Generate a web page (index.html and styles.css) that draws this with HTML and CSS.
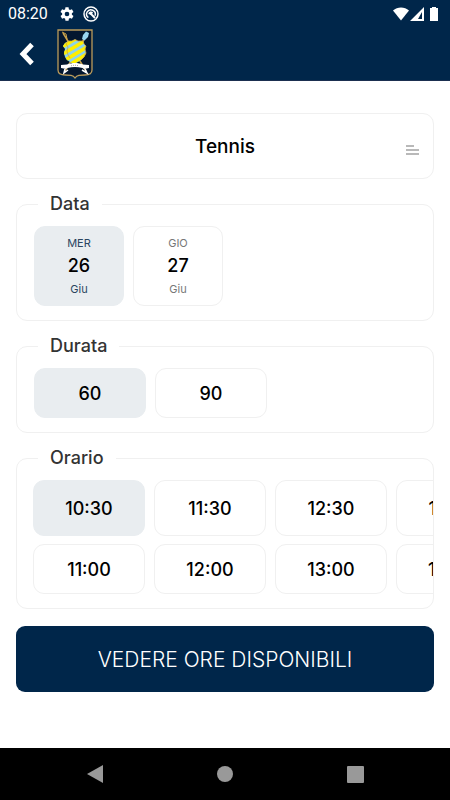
FILE: index.html
```html
<!DOCTYPE html>
<html lang="it">
<head>
    <meta charset="UTF-8">
    <meta name="viewport" content="width=device-width, initial-scale=1.0">
    <title>Prenotazione</title>
    <link rel="stylesheet" href="styles.css">
</head>
<body>

    <!-- Status bar and club header -->
    <header class="top">
        <div class="status-bar">
            <span class="clock">08:20</span>
            <svg class="status-icon" viewBox="0 0 24 24" aria-hidden="true">
                <path fill="#fff" fill-rule="evenodd" d="M9.700 2h4.600l.5 3 1.700 1 2.900-1.100 2.300 4-2.400 2v2.200l2.400 2-2.300 4-2.900-1.100-1.700 1-.5 3H9.700l-.5-3-1.700-1-2.900 1.100-2.300-4 2.400-2v-2.200l-2.400-2 2.300-4L7.500 6l1.700-1zM12 8.500a3.500 3.500 0 1 0 0 7 3.500 3.500 0 1 0 0-7z"/>
            </svg>
            <svg class="status-icon" viewBox="0 0 24 24" aria-hidden="true">
                <g fill="none" stroke="#fff" stroke-width="2.200">
                    <circle cx="12" cy="12" r="10.500"/>
                    <path d="M8 17.500a6.500 6.500 0 1 1 10-3"/>
                    <path stroke-width="3" d="M10 10l8 8"/>
                </g>
                <path d="M8 12a4 4 0 0 1 7-2.500l-2 4z" fill="#fff"/>
            </svg>
            <svg class="signal" viewBox="0 0 50 16" aria-hidden="true">
                <path fill="#fff" d="M1 4.500C5.500.5 12.500.5 17 4.500L9 14.500z"/>
                <path fill="#fff" fill-rule="evenodd" d="M32 1v14H18zM30 6l-4 7h4z"/>
                <path fill="#fff" d="M40 1h4v1h2v13h-8V2h2z"/>
            </svg>
        </div>
        <div class="header">
            <button class="back" type="button" aria-label="Indietro">
                <svg width="16" height="24" viewBox="0 0 16 24">
                    <path d="M13 2.500L4 12l9 9.500" fill="none" stroke="#fff" stroke-width="5"/>
                </svg>
            </button>
            <svg class="crest" viewBox="0 0 36 50" aria-hidden="true">
                <defs>
                    <clipPath id="shield">
                        <path d="M11 12h4l3-1.500 3 1.500h5l1 3 2 2-1 3 1 4-2 4-3 3-3 2-4 2-4-2-3-2-2-3-1-4 1-4-2-3 2-3z"/>
                    </clipPath>
                </defs>
                <path d="M1 1h34v40c0 4-3 5-7 5-5 0-8 0-10 3-2-3-5-3-10-3-4 0-7-1-7-5z" fill="#04172f" stroke="#b99a5b" stroke-width="1.300"/>
                <path d="M6 4l23 38M29 7L8 42" stroke="#c9a24c" stroke-width="1.500"/>
                <path d="M5 3l4 2 1 5" fill="none" stroke="#c9a24c"/>
                <path d="M25 10l1-4 3-3.500 3 1.500-1 4-3.500 3.500z" fill="#9ad5f0"/>
                <g clip-path="url(#shield)">
                    <path fill="#8ed3ea" d="M6 9h26v30H6z"/>
                    <path stroke="#ffee00" stroke-width="3.600" d="M5 18l20-12M5 25.500l26-15.500M5 33l26-15.500M8 38.500l23-14"/>
                </g>
                <path d="M11 12h4l3-1.500 3 1.500h5l1 3 2 2-1 3 1 4-2 4-3 3" fill="none" stroke="#c9a24c" stroke-width=".8"/>
                <path d="M11 12l-2 3 2 3-1 4 1 4 2 3" fill="none" stroke="#c9a24c" stroke-width=".8"/>
                <path fill="#fff" d="M4 36l6-.5c5-2 11-2 16 0l6 .5v3l-5 1-1.500-1c-5-1.500-10-1.500-15 0l-1.500 1-5-1z"/>
                <path d="M8 40l-1 4 4-3M28 40l2 4-5-3" fill="none" stroke="#fff" stroke-width="1.500"/>
                <path d="M14 36.800q4-1 8 0" fill="none" stroke="#8b8b8b" stroke-dasharray="1 1"/>
            </svg>
        </div>
    </header>

    <main class="booking">
        <form class="booking-form">
            <div class="sport">
                <select class="sport-select" aria-label="Sport">
                    <option>Tennis</option>
                </select>
                <svg class="sport-icon" width="13" height="10" viewBox="0 0 13 10" aria-hidden="true">
                    <path d="M0 1h8M0 5h13M0 9h13" stroke="#a3a3a3" stroke-width="1.500"/>
                </svg>
            </div>

            <fieldset class="group">
                <legend>Data</legend>
                <div class="options">
                    <label class="option day">
                        <input type="radio" name="data" value="26" checked>
                        <span class="small">MER</span>
                        <span class="number">26</span>
                        <span class="small">Giu</span>
                    </label>
                    <label class="option day">
                        <input type="radio" name="data" value="27">
                        <span class="small">GIO</span>
                        <span class="number">27</span>
                        <span class="small">Giu</span>
                    </label>
                </div>
            </fieldset>

            <fieldset class="group">
                <legend>Durata</legend>
                <div class="options">
                    <label class="option"><input type="radio" name="durata" value="60" checked>60</label>
                    <label class="option"><input type="radio" name="durata" value="90">90</label>
                </div>
            </fieldset>

            <fieldset class="group group-times">
                <legend>Orario</legend>
                <!-- Two rows that scroll sideways -->
                <div class="times">
                    <label class="option"><input type="radio" name="orario" value="10:30" checked>10:30</label>
                    <label class="option"><input type="radio" name="orario" value="11:00">11:00</label>
                    <label class="option"><input type="radio" name="orario" value="11:30">11:30</label>
                    <label class="option"><input type="radio" name="orario" value="12:00">12:00</label>
                    <label class="option"><input type="radio" name="orario" value="12:30">12:30</label>
                    <label class="option"><input type="radio" name="orario" value="13:00">13:00</label>
                    <label class="option"><input type="radio" name="orario" value="13:30">13:30</label>
                    <label class="option"><input type="radio" name="orario" value="14:00">14:00</label>
                </div>
            </fieldset>

            <button class="submit" type="button">VEDERE ORE DISPONIBILI</button>
        </form>
    </main>

    <!-- System navigation -->
    <nav class="system-nav">
        <button type="button" aria-label="Indietro">
            <svg width="18" height="18" viewBox="0 0 18 18"><path d="M1 9L17 0v18z" fill="#999"/></svg>
        </button>
        <button type="button" aria-label="Home">
            <svg width="18" height="18" viewBox="0 0 18 18"><circle cx="9" cy="9" r="8" fill="#999"/></svg>
        </button>
        <button type="button" aria-label="Recenti">
            <svg width="18" height="18" viewBox="0 0 18 18"><rect x="1" y="1" width="17" height="17" rx="1" fill="#999"/></svg>
        </button>
    </nav>

</body>
</html>
```

FILE: styles.css
```css
* {
    box-sizing: border-box;
}
body {
    margin: 0;
    min-height: 100vh;
    display: flex;
    flex-direction: column;
    background-color: #fff;
    color: #000;
    font-family: Inter, "Open Sans", sans-serif;
}
button {
    border: none;
    padding: 0;
    background: none;
    cursor: pointer;
}
svg {
    display: block;
}

/* Header */
.top {
    background-color: #00264a;
    border-bottom: 1px solid #1b2f50;
}
.status-bar {
    display: flex;
    align-items: center;
    gap: 8px;
    height: 27px;
    padding: 0 8px;
}
.clock {
    margin-right: 3px;
    color: #fff;
    font-family: Roboto, sans-serif;
    font-size: 16px;
}
.status-icon {
    width: 16px;
    height: 16px;
}
.signal {
    width: 50px;
    height: 16px;
    margin-left: auto;
}
.header {
    display: flex;
    align-items: center;
    gap: 22px;
    height: 53px;
    padding-left: 19px;
}
.crest {
    width: 36px;
    height: 50px;
}

/* Booking form */
.booking {
    flex: 1;
    padding: 32px 16px 20px;
}
.booking-form {
    display: flex;
    flex-direction: column;
    gap: 15px;
}
.sport {
    position: relative;
}
.sport-select {
    display: block;
    width: 100%;
    height: 66px;
    border: 1px solid #f0f0f0;
    border-radius: 11px;
    background-color: #fff;
    color: #000;
    font-family: inherit;
    font-size: 19px;
    font-weight: 500;
    text-align: center;
    text-align-last: center;
    appearance: none;
}
.sport-icon {
    position: absolute;
    right: 15px;
    bottom: 24px;
    pointer-events: none;
}
.group {
    min-width: 0;
    margin: 0;
    padding: 12px 17px 14px;
    border: 1px solid #f0f0f0;
    border-radius: 11px;
}
.group legend {
    margin-left: 4px;
    padding: 0 12px;
    color: #333;
    font-size: 18px;
    font-weight: 500;
    line-height: 20px;
}
.options {
    display: flex;
    gap: 9px;
}
.option {
    display: flex;
    align-items: center;
    justify-content: center;
    width: 112px;
    height: 50px;
    border: 1px solid #f0f0f0;
    border-radius: 11px;
    font-size: 18px;
    font-weight: 500;
    cursor: pointer;
}
.option input {
    appearance: none;
    width: 0;
    height: 0;
    margin: 0;
}
.option:has(input:checked) {
    background-color: #e9edf0;
    border-color: #e9edf0;
}
.option:has(input:focus-visible) {
    outline: 2px solid #00264a;
}
.day {
    flex-direction: column;
    width: 90px;
    height: 80px;
}
.day .small {
    color: #777;
    font-size: 11px;
    font-weight: 400;
    line-height: 20px;
}
.day:has(input:checked) .small {
    color: #2b4560;
}
.day .number {
    line-height: 26px;
}
.group-times {
    padding-right: 0;
    padding-left: 16px;
}
.group-times legend {
    margin-left: 5px;
}
.times {
    display: grid;
    grid-template-rows: 56px 50px;
    grid-auto-flow: column;
    grid-auto-columns: 112px;
    gap: 8px 9px;
    overflow-x: auto;
    scrollbar-width: none;
}
.times .option {
    height: auto;
}
.submit {
    height: 66px;
    margin-top: 2px;
    border-radius: 9px;
    background-color: #00264a;
    color: #fff;
    font-family: inherit;
    font-size: 21px;
    font-weight: 300;
}

/* System navigation */
.system-nav {
    display: flex;
    align-items: center;
    justify-content: space-between;
    height: 52px;
    padding: 0 86px;
    background-color: #000;
}
```
